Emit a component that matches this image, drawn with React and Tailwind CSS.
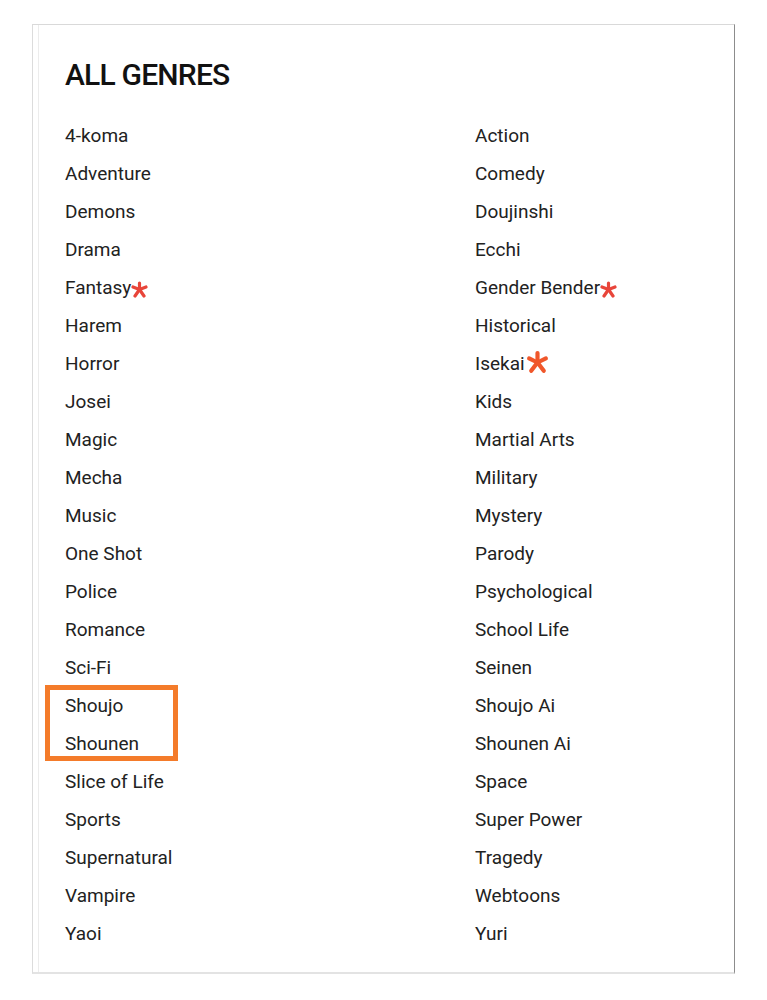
import React from 'react';

const genres = [
  ['4-koma', 'Action'],
  ['Adventure', 'Comedy'],
  ['Demons', 'Doujinshi'],
  ['Drama', 'Ecchi'],
  ['Fantasy*', 'Gender Bender*'],
  ['Harem', 'Historical'],
  ['Horror', 'Isekai**'],
  ['Josei', 'Kids'],
  ['Magic', 'Martial Arts'],
  ['Mecha', 'Military'],
  ['Music', 'Mystery'],
  ['One Shot', 'Parody'],
  ['Police', 'Psychological'],
  ['Romance', 'School Life'],
  ['Sci-Fi', 'Seinen'],
  ['Shoujo', 'Shoujo Ai'],
  ['Shounen', 'Shounen Ai'],
  ['Slice of Life', 'Space'],
  ['Sports', 'Super Power'],
  ['Supernatural', 'Tragedy'],
  ['Vampire', 'Webtoons'],
  ['Yaoi', 'Yuri'],
];

const Star = ({ big }) => {
  if (big) {
    // bigger, more orange one next to Isekai
    return (
      <svg width="23" height="23" viewBox="0 0 22 22" className="ml-[1px] mt-[-3px]">
        <g stroke="#f0572b" strokeWidth="4" strokeLinecap="round">
          <line x1="11" y1="2" x2="11" y2="11" />
          <line x1="11" y1="11" x2="3" y2="7" />
          <line x1="11" y1="11" x2="19" y2="7" />
          <line x1="11" y1="11" x2="5" y2="19" />
          <line x1="11" y1="11" x2="17" y2="19" />
        </g>
      </svg>
    );
  }
  return (
    <svg width="17" height="17" viewBox="0 0 17 17" className="mt-[3px]">
      <g stroke="#e8453a" strokeWidth="3.2" strokeLinecap="round">
        <line x1="8.5" y1="2" x2="8.5" y2="8.5" />
        <line x1="8.5" y1="8.5" x2="2" y2="6" />
        <line x1="8.5" y1="8.5" x2="15" y2="6" />
        <line x1="8.5" y1="8.5" x2="4" y2="15" />
        <line x1="8.5" y1="8.5" x2="13" y2="15" />
      </g>
    </svg>
  );
};

const Genre = ({ name }) => {
  const big = name.endsWith('**');
  const marked = name.endsWith('*');
  const label = name.replace(/\*+$/, '');
  return (
    <div className="h-[38px] flex items-center text-[19px] text-[#222]">
      <span>{label}</span>
      {marked && <Star big={big} />}
    </div>
  );
};

export default function App() {
  return (
    <div className="w-[767px] h-[1000px] bg-white pt-[24px] pl-[32px]" style={{ fontFamily: 'Roboto, "Liberation Sans", sans-serif' }}>
      <div className="relative w-[703px] h-[950px] border-t border-t-[#d9d9d9] border-r border-r-[#8c8c8c] border-b-2 border-b-[#e3e3e3] border-l border-l-[#dcdcdc] shadow-[inset_5px_0_0_#fff,inset_6px_0_0_#ececec] pt-[35px] pl-[32px]">
        <h1 className="text-[30px] leading-[30px] font-medium text-[#111] tracking-[-0.8px]">ALL GENRES</h1>
        <div className="mt-[27px] grid grid-cols-[410px_1fr]">
          {genres.map(([a, b]) => (
            <React.Fragment key={a}>
              <Genre name={a} />
              <Genre name={b} />
            </React.Fragment>
          ))}
        </div>
        <div className="absolute left-[12px] top-[660px] w-[133px] h-[76px] border-[5px] border-[#f47b2a]" />
      </div>
    </div>
  );
}
